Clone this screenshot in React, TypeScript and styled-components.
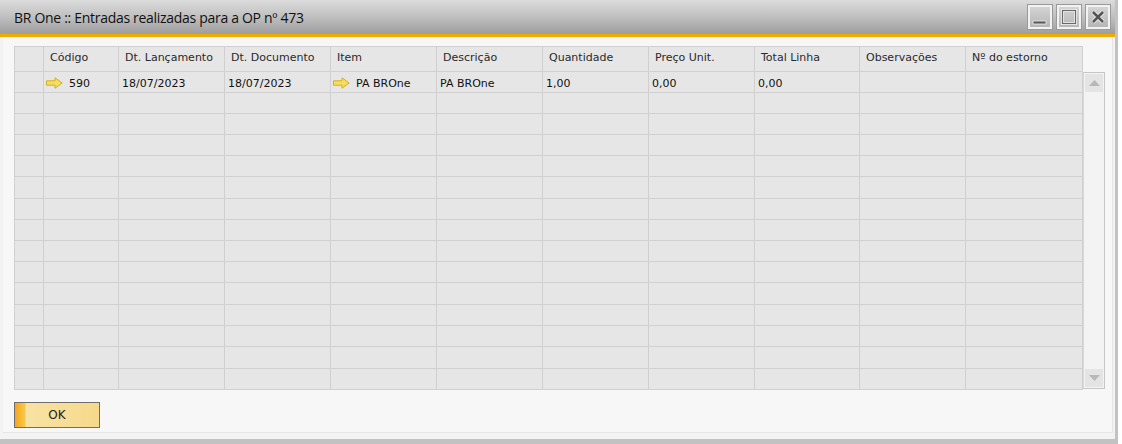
import React from "react";
import styled, { createGlobalStyle } from "styled-components";

const Global = createGlobalStyle`
  html, body { margin: 0; padding: 0; background: #ffffff; }
  body { font-family: "DejaVu Sans", Tahoma, sans-serif; }
`;

const Window = styled.div`
  width: 1115px;
  height: 439px;
  display: flex;
  flex-direction: column;
  background: #f3f3f3;
  border-right: 3px solid #c2c2c2;
  border-bottom: 5px solid #c2c2c2;
`;

const TitleBar = styled.div`
  height: 34px;
  flex: none;
  display: flex;
  align-items: center;
  justify-content: space-between;
  padding: 0 5px 0 14px;
  background: linear-gradient(#dcdcdc 0%, #c2c2c2 45%, #9e9e9e 100%);
`;

const Title = styled.span`
  font-family: "Open Sans", "Noto Sans", sans-serif;
  font-size: 14px;
  color: #111;
  letter-spacing: -0.3px;
`;

const WinButtons = styled.div`
  display: flex;
  gap: 5px;
`;

const WinButton = styled.div`
  width: 24px;
  height: 24px;
  box-sizing: border-box;
  border: 2px solid #f2f2f2;
  box-shadow: 0 0 0 1px #9a9a9a;
  background: linear-gradient(#d4d4d4, #b6b6b6);
  display: flex;
  align-items: center;
  justify-content: center;
`;

const OrangeBar = styled.div`
  height: 3px;
  flex: none;
  background: #f0ab00;
`;

const Body = styled.div`
  flex: 1;
  margin: 0 2px 6px 3px;
  background: #f7f7f7;
  border-right: 1px solid #e6e6e6;
  border-bottom: 1px solid #e6e6e6;
  padding: 9px 0 0 11px;
  display: flex;
  flex-direction: column;
`;

const GridArea = styled.div`
  display: flex;
  align-items: flex-start;
`;

const Table = styled.div`
  display: grid;
  grid-template-columns: 29px 75px 106px 106px 106px 106px 106px 106px 105px 106px 117px;
  border-left: 1px solid #d0d0d0;
  border-top: 1px solid #d0d0d0;
`;

const HeadCell = styled.div`
  height: 25px;
  box-sizing: border-box;
  border-right: 1px solid #d0d0d0;
  border-bottom: 1px solid #d0d0d0;
  background: #e6e6e6;
  padding: 4px 0 0 6px;
  font-size: 11px;
  color: #2a2a2a;
  white-space: nowrap;
  overflow: hidden;
`;

const Cell = styled.div<{ $row: number }>`
  height: ${(p) => ([5, 10, 13].includes(p.$row) ? 22 : 21)}px;
  box-sizing: border-box;
  border-right: 1px solid #d0d0d0;
  border-bottom: 1px solid #d0d0d0;
  background: #e6e6e6;
  padding: 2px 0 0 3px;
  display: flex;
  align-items: center;
  gap: 6px;
  font-size: 11px;
  color: #111;
  white-space: nowrap;
  overflow: hidden;
`;

const ScrollBar = styled.div`
  margin-top: 26px;
  width: 22px;
  height: 317px;
  box-sizing: border-box;
  border: 1px solid #c6c6c6;
  border-left: 1px solid #d8d8d8;
  background: #f3f3f3;
  padding: 1px;
  display: flex;
  flex-direction: column;
  justify-content: space-between;
`;

const ScrollBtn = styled.div`
  height: 18px;
  background: #e4e4e4;
  display: flex;
  align-items: center;
  justify-content: center;
`;

const Footer = styled.div`
  padding-top: 12px;
`;

const OkButton = styled.button`
  width: 86px;
  height: 26px;
  box-sizing: border-box;
  border: 1px solid #6e6e6e;
  padding: 0;
  display: flex;
  background: linear-gradient(90deg, #f4a51c 0px, #f8c94a 10px, #f8e2a4 11px, #f6d98a 100%);
  font-family: "DejaVu Sans", Tahoma, sans-serif;
  font-size: 12px;
  color: #222;
  align-items: center;
  justify-content: center;
`;

const ArrowIcon = styled.svg`
  margin-left: -1px;
  flex: none;
`;

const Arrow = () => (
  <ArrowIcon width="17" height="12" viewBox="0 0 17 12">
    <path d="M0.5 3.8 H9 V0.8 L16.2 6 L9 11.2 V8.2 H0.5 Z" fill="#f7de5a" stroke="#d4ad28" strokeWidth="1" />
  </ArrowIcon>
);

const columns = [
  "",
  "Código",
  "Dt. Lançamento",
  "Dt. Documento",
  "Item",
  "Descrição",
  "Quantidade",
  "Preço Unit.",
  "Total Linha",
  "Observações",
  "Nº do estorno",
];

const firstRow: React.ReactNode[] = [
  "",
  <><Arrow />590</>,
  "18/07/2023",
  "18/07/2023",
  <><Arrow />PA BROne</>,
  "PA BROne",
  "1,00",
  "0,00",
  "0,00",
  "",
  "",
];

export default function App() {
  const rows = Array.from({ length: 15 }, (_, i) => i);
  return (
    <>
      <Global />
      <Window>
        <TitleBar>
          <Title>BR One :: Entradas realizadas para a OP nº 473</Title>
          <WinButtons>
            <WinButton>
              <svg width="18" height="18" viewBox="0 0 18 18">
                <rect x="2" y="13" width="13" height="3" fill="#5a5a5a" stroke="#f0f0f0" strokeWidth="0.8" />
              </svg>
            </WinButton>
            <WinButton>
              <svg width="18" height="18" viewBox="0 0 18 18">
                <rect x="2.5" y="2.5" width="13" height="13" fill="none" stroke="#f0f0f0" strokeWidth="3" />
                <rect x="2.5" y="2.5" width="13" height="13" fill="none" stroke="#6a6a6a" strokeWidth="1.2" />
              </svg>
            </WinButton>
            <WinButton>
              <svg width="18" height="18" viewBox="0 0 18 18">
                <path d="M4 4 L14 14 M14 4 L4 14" stroke="#f0f0f0" strokeWidth="4.5" />
                <path d="M4 4 L14 14 M14 4 L4 14" stroke="#555" strokeWidth="2.6" />
              </svg>
            </WinButton>
          </WinButtons>
        </TitleBar>
        <OrangeBar />
        <Body>
          <GridArea>
            <Table>
              {columns.map((c, i) => (
                <HeadCell key={i}>{c}</HeadCell>
              ))}
              {rows.map((r) =>
                columns.map((_, i) => (
                  <Cell key={`${r}-${i}`} $row={r}>
                    {r === 0 ? firstRow[i] : ""}
                  </Cell>
                ))
              )}
            </Table>
            <ScrollBar>
              <ScrollBtn>
                <svg width="11" height="6" viewBox="0 0 11 6">
                  <path d="M0 6 L5.5 0 L11 6 Z" fill="#b8b8b8" />
                </svg>
              </ScrollBtn>
              <ScrollBtn>
                <svg width="11" height="6" viewBox="0 0 11 6">
                  <path d="M0 0 L5.5 6 L11 0 Z" fill="#b8b8b8" />
                </svg>
              </ScrollBtn>
            </ScrollBar>
          </GridArea>
          <Footer>
            <OkButton>OK</OkButton>
          </Footer>
        </Body>
      </Window>
    </>
  );
}
